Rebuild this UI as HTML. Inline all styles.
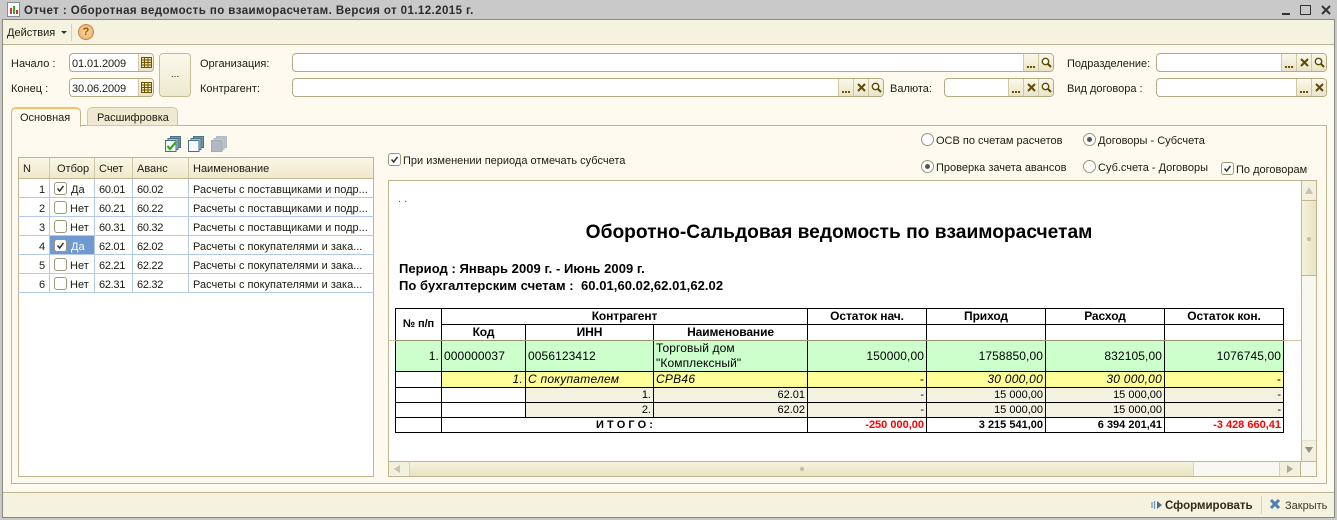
<!DOCTYPE html>
<html><head><meta charset="utf-8"><style>
html,body{margin:0;padding:0}
body{width:1337px;height:520px;position:relative;overflow:hidden;background:#fffaf0;font:11px "Liberation Sans",sans-serif;color:#1c1c10}
div,span.a,svg.a{position:absolute;box-sizing:border-box}
.t{white-space:nowrap;line-height:14px;height:14px}
.f{background:#fff;border:1px solid #b5ab82;border-radius:4px;height:19px;overflow:hidden}
.b{top:0;width:15px;height:17px;background:linear-gradient(#fbf8ea,#e9e4c8);border-left:1px solid #cfc8a4}
.d:after{content:"";position:absolute;left:3px;bottom:3px;width:8px;height:2px;background:repeating-linear-gradient(90deg,#6b5300 0 2px,transparent 2px 3px)}
.x svg,.s svg,.c svg{position:absolute;left:2px;top:3px}
.g{left:18px;width:356px;height:19px;border-bottom:1px solid #b4c9e6}
.gc{top:179px;height:114px;width:1px;background:#b4c9e6}
.n{letter-spacing:-.3px}
.cb{width:13px;height:13px;border:1px solid #9c9778;border-radius:3px;background:#fff}
.r{width:13px;height:13px;border:1px solid #9a9678;border-radius:50%;background:#fff}
.r.on:after{content:"";position:absolute;left:3px;top:3px;width:5px;height:5px;border-radius:50%;background:#555}
table{position:absolute;left:395px;top:308px;border-collapse:collapse;table-layout:fixed;width:888px;font:11px "Liberation Sans",sans-serif;color:#000}
td{border:1px solid #000;padding:0 2px 0 2px;white-space:nowrap;overflow:hidden;height:14px;line-height:13px}
.r16 td{height:15px}
.h{font-weight:bold;text-align:center;font-size:12px;letter-spacing:-.1px}
.gr td{background:#ccffcc;font-size:12px;height:30px;letter-spacing:.1px}
.ye td{background:#ffff99;font-style:italic;font-size:12px;letter-spacing:.25px}
.be{background:#f3f1df}
.rt{text-align:right}
</style></head><body>
<svg width="0" height="0" style="position:absolute"><defs>
<symbol id="ix" viewBox="0 0 11 11"><path d="M2 2l7 7M9 2l-7 7" stroke="#5f4a00" stroke-width="2" fill="none"/></symbol>
<symbol id="is" viewBox="0 0 11 11"><circle cx="4.5" cy="4.5" r="3.2" stroke="#5f4a00" stroke-width="1.4" fill="#fff"/><path d="M7 7l3 3" stroke="#5f4a00" stroke-width="2"/></symbol>
<symbol id="ic" viewBox="0 0 11 11"><rect x=".5" y=".5" width="10" height="10" fill="#efe6b8" stroke="#6b5300"/><path d="M0 3h11M0 5.500h11M0 8h11M3.500 0v11M7 0v11" stroke="#6b5300"/></symbol>
<symbol id="ick" viewBox="0 0 13 13"><path d="M3 6.500l2.500 3L10 3.500" stroke="#333" stroke-width="1.800" fill="none"/></symbol>
<symbol id="st" viewBox="0 0 16 16"><rect x="5.500" y=".5" width="10" height="11" fill="#6d95ae" stroke="#4a7088"/><rect x="3" y="2.500" width="10" height="11" fill="#a9c4d4" stroke="#4a7088"/><rect x=".5" y="4.500" width="10.500" height="11" fill="#f4f8fb" stroke="#4a7088"/></symbol>
</defs></svg>

<!-- title -->
<div style="left:0;top:0;width:1337px;height:20px;background:#c9c9c9"></div>
<svg class="a" style="position:absolute;left:7px;top:2px" width="13" height="15" viewBox="0 0 13 15"><rect x=".5" y=".5" width="12" height="14" fill="#fff" stroke="#8a8a9a"/><rect x="3" y="6" width="2" height="6" fill="#d33"/><rect x="6" y="4" width="2" height="8" fill="#3a3"/><rect x="9" y="8" width="2" height="4" fill="#c33"/></svg>
<div class="t" style="left:24px;top:4px;font-weight:bold;font-size:11.500px;color:#2b2b2b;letter-spacing:.42px">Отчет : Оборотная ведомость по взаиморасчетам. Версия от 01.12.2015 г.</div>
<div style="left:1282px;top:13px;width:8px;height:2px;background:#333"></div>
<div style="left:1300px;top:5px;width:11px;height:10px;border:1px solid #333"></div>
<svg class="a" style="position:absolute;left:1321px;top:5px" width="10" height="10"><path d="M1 1l8 8M9 1l-8 8" stroke="#333" stroke-width="2"/></svg>

<!-- frame -->
<div style="left:0;top:19px;width:1337px;height:501px;border:2px solid #c9c9c9;border-top:0;border-bottom:3px solid #c9c9c9"></div>
<div style="left:2px;top:19px;width:1333px;height:499px;border:1px solid #8a8a7c"></div>

<!-- toolbar -->
<div style="left:3px;top:20px;width:1331px;height:25px;background:#f5f2e0;border-bottom:1px solid #bfb58f"></div>
<div class="t" style="left:7px;top:26px;font-size:11px">Действия</div>
<div style="left:61px;top:31px;width:0;height:0;border:3px solid transparent;border-top:3px solid #333"></div>
<div style="left:71px;top:24px;width:1px;height:17px;background:#d8d2b4"></div>
<div style="left:78px;top:24px;width:16px;height:16px;border-radius:50%;background:radial-gradient(#fdd9a0,#f0a860);border:1px solid #b98a50;color:#8a5a1a;font-size:11px;font-weight:bold;text-align:center;line-height:14px">?</div>

<!-- filter labels -->
<div class="t" style="left:11px;top:57px">Начало :</div>
<div class="t" style="left:11px;top:82px">Конец :</div>
<div class="t" style="left:200px;top:57px">Организация:</div>
<div class="t" style="left:200px;top:82px">Контрагент:</div>
<div class="t" style="left:890px;top:82px">Валюта:</div>
<div class="t" style="left:1067px;top:57px">Подразделение:</div>
<div class="t" style="left:1067px;top:82px">Вид договора :</div>

<!-- dates -->
<div class="f" style="left:69px;top:53px;width:85px"><div class="t" style="left:2px;top:3px;letter-spacing:-.1px">01.01.2009</div><div class="b c" style="right:0"><svg width="11" height="11"><use href="#ic"/></svg></div></div>
<div class="f" style="left:69px;top:78px;width:85px"><div class="t" style="left:2px;top:3px;letter-spacing:-.1px">30.06.2009</div><div class="b c" style="right:0"><svg width="11" height="11"><use href="#ic"/></svg></div></div>
<div style="left:159px;top:53px;width:32px;height:44px;border:1px solid #c5bc96;border-radius:4px;background:linear-gradient(#fbf8ea,#eeeacf);text-align:center;line-height:42px;font-size:10px">...</div>

<!-- fields -->
<div class="f" style="left:292px;top:53px;width:762px"><div class="b d" style="right:15px"></div><div class="b s" style="right:0"><svg width="11" height="11"><use href="#is"/></svg></div></div>
<div class="f" style="left:292px;top:78px;width:592px"><div class="b d" style="right:30px"></div><div class="b x" style="right:15px"><svg width="11" height="11"><use href="#ix"/></svg></div><div class="b s" style="right:0"><svg width="11" height="11"><use href="#is"/></svg></div></div>
<div class="f" style="left:944px;top:78px;width:110px"><div class="b d" style="right:30px"></div><div class="b x" style="right:15px"><svg width="11" height="11"><use href="#ix"/></svg></div><div class="b s" style="right:0"><svg width="11" height="11"><use href="#is"/></svg></div></div>
<div class="f" style="left:1156px;top:53px;width:171px"><div class="b d" style="right:30px"></div><div class="b x" style="right:15px"><svg width="11" height="11"><use href="#ix"/></svg></div><div class="b s" style="right:0"><svg width="11" height="11"><use href="#is"/></svg></div></div>
<div class="f" style="left:1156px;top:78px;width:171px"><div class="b d" style="right:15px"></div><div class="b x" style="right:0"><svg width="11" height="11"><use href="#ix"/></svg></div></div>

<!-- panel and tabs -->
<div style="left:11px;top:125px;width:1316px;height:359px;border:1px solid #bfb58f"></div>
<div style="left:87px;top:107px;width:91px;height:19px;background:#efe9d2;border:1px solid #cfc7a4;border-radius:5px 5px 0 0"></div>
<div class="t" style="left:97px;top:111px">Расшифровка</div>
<div style="left:11px;top:107px;width:70px;height:20px;background:#fffaf0;border:1px solid #bfb58f;border-top:2px solid #f2c26a;border-bottom:0;border-radius:5px 5px 0 0"></div>
<div class="t" style="left:20px;top:111px">Основная</div>

<!-- grid icons -->
<svg class="a" style="position:absolute;left:165px;top:136px" width="16" height="16"><use href="#st"/><path d="M2.500 10l2.500 3 6-7" stroke="#3aa51f" stroke-width="2.200" fill="none"/></svg>
<svg class="a" style="position:absolute;left:188px;top:136px" width="16" height="16"><use href="#st"/></svg>
<svg class="a" style="position:absolute;left:211px;top:136px;opacity:.6" width="16" height="16"><rect x="5.500" y=".5" width="10" height="11" fill="#8fa5b4" stroke="#7b92a2"/><rect x="3" y="2.500" width="10" height="11" fill="#9fb2bf" stroke="#7b92a2"/><rect x=".5" y="4.500" width="10.500" height="11" fill="#7c8ea0" stroke="#66798c"/></svg>

<!-- grid -->
<div style="left:18px;top:157px;width:356px;height:320px;background:#fff;border:1px solid #bfb58f"></div>
<div style="left:19px;top:158px;width:354px;height:21px;background:linear-gradient(#fbf7e6,#efe8cc);border-bottom:1px solid #bfb58f"></div>
<div class="t" style="left:23px;top:162px">N</div>
<div class="t" style="left:57px;top:162px">Отбор</div>
<div class="t" style="left:99px;top:162px">Счет</div>
<div class="t" style="left:137px;top:162px">Аванс</div>
<div class="t" style="left:193px;top:162px">Наименование</div>
<div style="left:49px;top:158px;width:1px;height:20px;background:#cfc7a4"></div>
<div style="left:94px;top:158px;width:1px;height:20px;background:#cfc7a4"></div>
<div style="left:132px;top:158px;width:1px;height:20px;background:#cfc7a4"></div>
<div style="left:188px;top:158px;width:1px;height:20px;background:#cfc7a4"></div>

<div class="g" style="top:179px"></div><div class="g" style="top:198px"></div><div class="g" style="top:217px"></div><div class="g" style="top:236px"></div><div class="g" style="top:255px"></div><div class="g" style="top:274px"></div>
<div style="left:50px;top:236px;width:44px;height:18px;background:#7099cf"></div>
<div class="gc" style="left:49px"></div><div class="gc" style="left:94px"></div><div class="gc" style="left:132px"></div><div class="gc" style="left:188px"></div>

<div class="t" style="left:39px;top:183px">1</div><div class="t" style="left:39px;top:202px">2</div><div class="t" style="left:39px;top:221px">3</div><div class="t" style="left:39px;top:240px">4</div><div class="t" style="left:39px;top:259px">5</div><div class="t" style="left:39px;top:278px">6</div>

<div class="cb" style="left:54px;top:182px"><svg width="11" height="11" style="position:absolute;left:0;top:0"><use href="#ick"/></svg></div>
<div class="cb" style="left:54px;top:201px"></div>
<div class="cb" style="left:54px;top:220px"></div>
<div class="cb" style="left:54px;top:239px"><svg width="11" height="11" style="position:absolute;left:0;top:0"><use href="#ick"/></svg></div>
<div class="cb" style="left:54px;top:258px"></div>
<div class="cb" style="left:54px;top:277px"></div>
<div class="t" style="left:71px;top:183px">Да</div><div class="t" style="left:70px;top:202px">Нет</div><div class="t" style="left:70px;top:221px">Нет</div><div class="t" style="left:71px;top:240px;color:#fff">Да</div><div class="t" style="left:70px;top:259px">Нет</div><div class="t" style="left:70px;top:278px">Нет</div>

<div class="t n" style="left:99px;top:183px">60.01</div><div class="t n" style="left:137px;top:183px">60.02</div><div class="t" style="left:193px;top:183px">Расчеты с поставщиками и подр...</div>
<div class="t n" style="left:99px;top:202px">60.21</div><div class="t n" style="left:137px;top:202px">60.22</div><div class="t" style="left:193px;top:202px">Расчеты с поставщиками и подр...</div>
<div class="t n" style="left:99px;top:221px">60.31</div><div class="t n" style="left:137px;top:221px">60.32</div><div class="t" style="left:193px;top:221px">Расчеты с поставщиками и подр...</div>
<div class="t n" style="left:99px;top:240px">62.01</div><div class="t n" style="left:137px;top:240px">62.02</div><div class="t" style="left:193px;top:240px">Расчеты с покупателями и зака...</div>
<div class="t n" style="left:99px;top:259px">62.21</div><div class="t n" style="left:137px;top:259px">62.22</div><div class="t" style="left:193px;top:259px">Расчеты с покупателями и зака...</div>
<div class="t n" style="left:99px;top:278px">62.31</div><div class="t n" style="left:137px;top:278px">62.32</div><div class="t" style="left:193px;top:278px">Расчеты с покупателями и зака...</div>

<!-- options -->
<div class="cb" style="left:388px;top:153px"><svg width="11" height="11" style="position:absolute;left:0;top:0"><use href="#ick"/></svg></div>
<div class="t" style="left:403px;top:154px">При изменении периода отмечать субсчета</div>
<div class="r" style="left:921px;top:133px"></div><div class="t" style="left:936px;top:134px">ОСВ по счетам расчетов</div>
<div class="r on" style="left:1083px;top:133px"></div><div class="t" style="left:1098px;top:134px">Договоры - Субсчета</div>
<div class="r on" style="left:921px;top:160px"></div><div class="t" style="left:936px;top:161px">Проверка зачета авансов</div>
<div class="r" style="left:1083px;top:160px"></div><div class="t" style="left:1098px;top:161px">Суб.счета - Договоры</div>
<div class="cb" style="left:1221px;top:162px"><svg width="11" height="11" style="position:absolute;left:0;top:0"><use href="#ick"/></svg></div>
<div class="t" style="left:1236px;top:163px">По договорам</div>

<!-- report -->
<div style="left:388px;top:180px;width:929px;height:297px;background:#fff;border:1px solid #bfb58f"></div>
<div class="t" style="left:398px;top:192px;color:#555;font-size:11px">. .</div>
<div class="t" style="left:389px;width:900px;top:223px;height:20px;line-height:20px;text-align:center;font-weight:bold;font-size:19.200px;color:#000">Оборотно-Сальдовая ведомость по взаиморасчетам</div>
<div class="t" style="left:399px;top:262px;font-weight:bold;font-size:13px;letter-spacing:.05px;color:#000">Период : Январь 2009 г. - Июнь 2009 г.</div>
<div class="t" style="left:399px;top:279px;font-weight:bold;font-size:13px;letter-spacing:.05px;color:#000">По бухгалтерским счетам :&nbsp; 60.01,60.02,62.01,62.02</div>

<table>
<colgroup><col style="width:46px"><col style="width:84px"><col style="width:128px"><col style="width:154px"><col style="width:119px"><col style="width:119px"><col style="width:119px"><col style="width:119px"></colgroup>
<tr class="r16"><td class="h" rowspan="2" style="font-size:11px">№ п/п</td><td class="h" colspan="3">Контрагент</td><td class="h">Остаток нач.</td><td class="h">Приход</td><td class="h">Расход</td><td class="h">Остаток кон.</td></tr>
<tr class="r16"><td class="h">Код</td><td class="h">ИНН</td><td class="h">Наименование</td><td></td><td></td><td></td><td></td></tr>
<tr class="gr"><td class="rt">1.</td><td>000000037</td><td>0056123412</td><td style="line-height:15px">Торговый дом<br>"Комплексный"</td><td class="rt">150000,00</td><td class="rt">1758850,00</td><td class="rt">832105,00</td><td class="rt">1076745,00</td></tr>
<tr class="ye r16"><td style="background:#fff"></td><td class="rt">1.</td><td>С покупателем</td><td>СРВ46</td><td class="rt">-</td><td class="rt">30 000,00</td><td class="rt">30 000,00</td><td class="rt">-</td></tr>
<tr><td></td><td></td><td class="be rt">1.</td><td class="be rt">62.01</td><td class="be rt">-</td><td class="be rt">15 000,00</td><td class="be rt">15 000,00</td><td class="be rt">-</td></tr>
<tr><td></td><td></td><td class="be rt">2.</td><td class="be rt">62.02</td><td class="be rt">-</td><td class="be rt">15 000,00</td><td class="be rt">15 000,00</td><td class="be rt">-</td></tr>
<tr><td></td><td colspan="3" style="font-weight:bold;text-align:center">И Т О Г О :</td><td class="rt" style="color:#f00;font-weight:bold">-250 000,00</td><td class="rt" style="font-weight:bold">3 215 541,00</td><td class="rt" style="font-weight:bold">6 394 201,41</td><td class="rt" style="color:#f00;font-weight:bold">-3 428 660,41</td></tr>
</table>
<div style="left:389px;top:340px;width:912px;height:1px;background:#bfb58f;opacity:.8"></div>

<!-- scrollbars -->
<div style="left:1301px;top:181px;width:15px;height:295px;background:#f8f7f0;border-left:1px solid #bfb58f"></div>
<div style="left:1301px;top:181px;width:15px;height:20px;background:#f3f0de;border-left:1px solid #bfb58f;border-bottom:1px solid #bfb58f"></div>
<div style="left:1305px;top:187px;width:0;height:0;border:4px solid transparent;border-bottom:7px solid #c5c3b4;border-top:0"></div>
<div style="left:1301px;top:201px;width:15px;height:75px;background:linear-gradient(90deg,#f6f2dd,#e9e3c2);border-left:1px solid #bfb58f;border-bottom:1px solid #bfb58f"></div>
<div style="left:1307px;top:237px;width:4px;height:4px;border-radius:50%;background:#c0bda8"></div>
<div style="left:1301px;top:440px;width:15px;height:21px;background:#f3f0de;border-left:1px solid #bfb58f;border-top:1px solid #e4dfc6"></div>
<div style="left:1305px;top:447px;width:0;height:0;border:4px solid transparent;border-top:6px solid #8f8f86;border-bottom:0"></div>

<div style="left:389px;top:461px;width:927px;height:15px;background:#f8f7f0;border-top:1px solid #bfb58f"></div>
<div style="left:389px;top:461px;width:21px;height:15px;background:#f3f0de;border-top:1px solid #bfb58f;border-right:1px solid #d9d3b5"></div>
<div style="left:394px;top:465px;width:0;height:0;border:4px solid transparent;border-right:6px solid #c5c3b4;border-left:0"></div>
<div style="left:410px;top:461px;width:784px;height:15px;background:linear-gradient(#f6f2dd,#e9e3c2);border-top:1px solid #bfb58f;border-right:1px solid #d9d3b5"></div>
<div style="left:800px;top:467px;width:4px;height:4px;border-radius:50%;background:#c0bda8"></div>
<div style="left:1279px;top:461px;width:22px;height:15px;background:#f3f0de;border-top:1px solid #bfb58f;border-left:1px solid #d9d3b5;border-right:1px solid #bfb58f"></div>
<div style="left:1287px;top:465px;width:0;height:0;border:4px solid transparent;border-left:6px solid #a9a79a;border-right:0"></div>

<!-- bottom bar -->
<div style="left:3px;top:492px;width:1331px;height:25px;background:#f5f2e0;border-top:1px solid #bfb58f"></div>
<svg class="a" style="position:absolute;left:1151px;top:500px" width="12" height="10"><path d="M1 2v6M3.500 1v8" stroke="#6f93b8" stroke-width="1.200"/><path d="M6 1l5 4-5 4z" fill="#4a6f96"/></svg>
<div class="t" style="left:1165px;top:499px;font-weight:bold;font-size:11.500px;color:#33291a">Сформировать</div>
<div style="left:1261px;top:496px;width:1px;height:18px;background:#d8d2b4"></div>
<svg class="a" style="position:absolute;left:1269px;top:498px" width="12" height="12"><path d="M2 2l8 8M10 2l-8 8" stroke="#4f80b3" stroke-width="3"/></svg>
<div class="t" style="left:1285px;top:499px;color:#3a3a2a">Закрыть</div>
</body></html>
